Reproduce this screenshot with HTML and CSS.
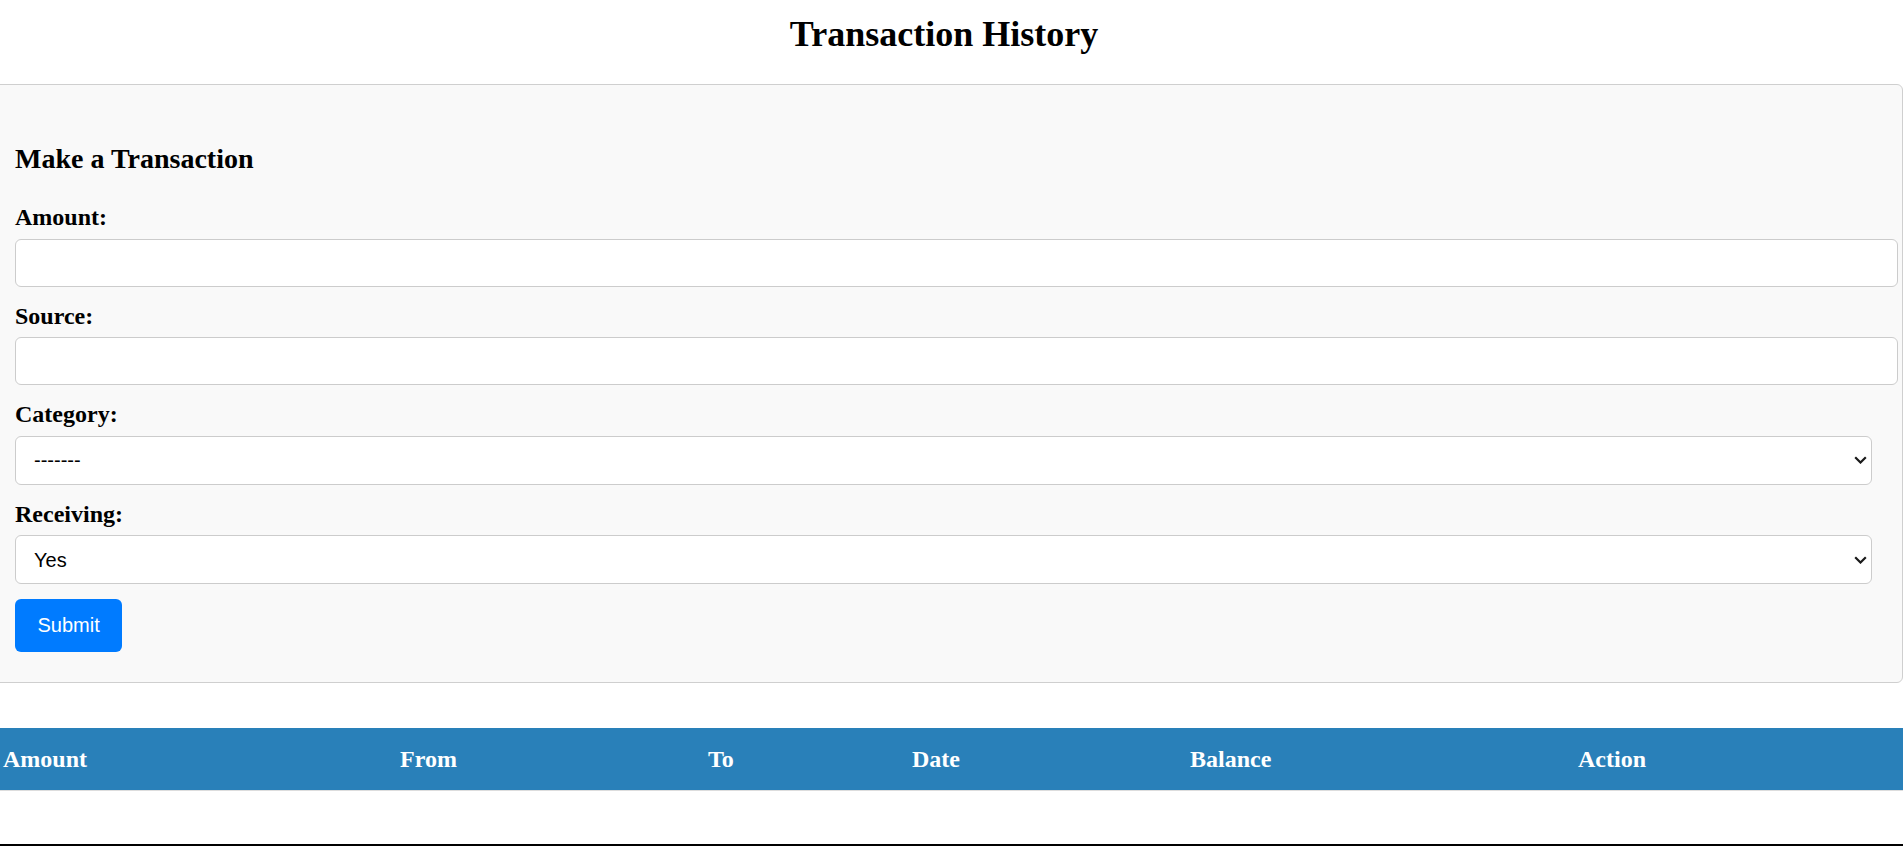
FILE: index.html
```html
<!DOCTYPE html>
<html lang="en">
<head>
<meta charset="utf-8">
<title>Transaction History</title>
<link rel="stylesheet" href="styles.css">
</head>
<body>
<div class="page">
  <h1 class="title">Transaction History</h1>

  <form class="card">
    <h3 class="card-title">Make a Transaction</h3>

    <label class="field-label" for="amount">Amount:</label>
    <input class="field-input" type="text" id="amount">

    <label class="field-label" for="source">Source:</label>
    <input class="field-input" type="text" id="source">

    <label class="field-label" for="category">Category:</label>
    <div class="select-wrap">
      <select class="field-select" id="category">
        <option>-------</option>
      </select>
      <svg class="chevron" width="13" height="8" viewBox="0 0 13 8"><path d="M1.2 1.2 L6.5 6.5 L11.8 1.2" fill="none" stroke="#1a1a1a" stroke-width="2.2"/></svg>
    </div>

    <label class="field-label" for="receiving">Receiving:</label>
    <div class="select-wrap">
      <select class="field-select" id="receiving">
        <option>Yes</option>
        <option>No</option>
      </select>
      <svg class="chevron" width="13" height="8" viewBox="0 0 13 8"><path d="M1.2 1.2 L6.5 6.5 L11.8 1.2" fill="none" stroke="#1a1a1a" stroke-width="2.2"/></svg>
    </div>

    <button class="submit-btn" type="button">Submit</button>
  </form>

  <table class="history">
    <thead>
      <tr>
        <th class="col-amount">Amount</th>
        <th class="col-from">From</th>
        <th class="col-to">To</th>
        <th class="col-date">Date</th>
        <th class="col-balance">Balance</th>
        <th class="col-action">Action</th>
      </tr>
    </thead>
    <tbody></tbody>
  </table>

  <div class="footer-line"></div>
</div>
</body>
</html>
```

FILE: styles.css
```css
html, body {
  margin: 0;
  padding: 0;
  overflow: hidden;
  background: #ffffff;
}

body {
  font-family: "Liberation Serif", "Times New Roman", serif;
  color: #000;
}

.page {
  padding-top: 14px;
  overflow: hidden;
}

.title {
  margin: 0 15px 29px 0;
  font-size: 36px;
  line-height: 41px;
  font-weight: bold;
  text-align: center;
}

.card {
  box-sizing: border-box;
  width: calc(100% + 16px);
  margin: 0 0 45px -16px;
  padding: 30px;
  background: #f9f9f9;
  border: 1px solid #cfcfcf;
  border-radius: 6px;
}

.card-title {
  margin: 28px 0;
  font-size: 28px;
  line-height: 32px;
  font-weight: bold;
}

.field-label {
  display: block;
  font-size: 24px;
  line-height: 28px;
  font-weight: bold;
  margin-bottom: 7.5px;
}

.field-input {
  display: block;
  box-sizing: content-box;
  width: 100%;
  height: 22px;
  padding: 12px;
  margin: 0 0 15px 0;
  border: 1px solid #cccccc;
  border-radius: 6px;
  background: #ffffff;
  font-family: "Liberation Sans", Arial, sans-serif;
  font-size: 20px;
}

.select-wrap {
  position: relative;
  margin-bottom: 15px;
}

.field-select {
  display: block;
  box-sizing: border-box;
  width: 100%;
  height: 49px;
  padding: 0 30px 0 18px;
  border: 1px solid #cccccc;
  border-radius: 6px;
  background: #ffffff;
  color: #000;
  font-family: "Liberation Sans", Arial, sans-serif;
  font-size: 20px;
  -webkit-appearance: none;
  appearance: none;
}

.chevron {
  position: absolute;
  right: 5.5px;
  top: 50%;
  transform: translateY(-50%);
  pointer-events: none;
}

.submit-btn {
  display: block;
  padding: 15px 22.5px;
  border: none;
  border-radius: 6px;
  background: #007bff;
  color: #ffffff;
  font-family: "Liberation Sans", Arial, sans-serif;
  font-size: 20px;
  line-height: 23px;
}

.history {
  width: 100%;
  border-collapse: collapse;
  table-layout: fixed;
}

.history th {
  background: #2980b9;
  color: #ffffff;
  text-align: left;
  font-size: 24px;
  line-height: 27px;
  font-weight: bold;
  padding: 18px 0 17px 3px;
  border-bottom: 1px solid #dddddd;
  white-space: nowrap;
}

.col-amount { width: 394px; }
.col-from { width: 305px; }
.col-to { width: 201px; }
.col-date { width: 275px; }
.col-balance { width: 385px; }
.col-action { width: auto; }

.footer-line {
  margin-top: 53px;
  border-top: 2px solid #000000;
}
```
